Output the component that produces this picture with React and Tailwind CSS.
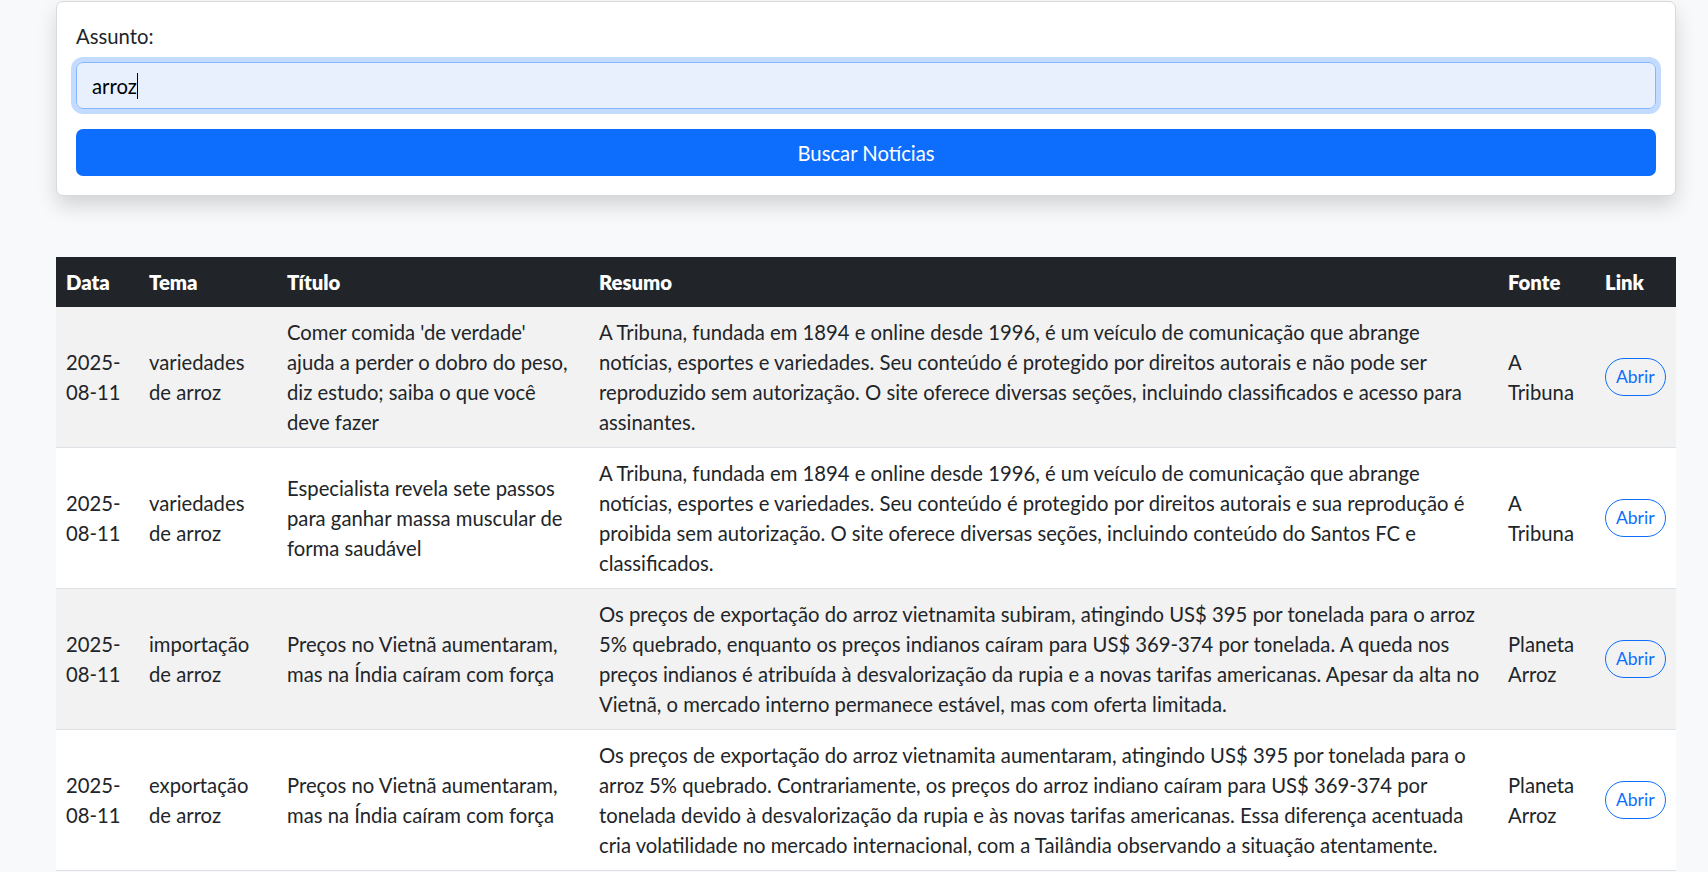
import React from 'react';

const rows = [
  {
    data: ['2025-', '08-11'],
    tema: ['variedades', 'de arroz'],
    titulo: ["Comer comida 'de verdade'", 'ajuda a perder o dobro do peso,', 'diz estudo; saiba o que você', 'deve fazer'],
    resumo: [
      'A Tribuna, fundada em 1894 e online desde 1996, é um veículo de comunicação que abrange',
      'notícias, esportes e variedades. Seu conteúdo é protegido por direitos autorais e não pode ser',
      'reproduzido sem autorização. O site oferece diversas seções, incluindo classificados e acesso para',
      'assinantes.',
    ],
    fonte: ['A', 'Tribuna'],
  },
  {
    data: ['2025-', '08-11'],
    tema: ['variedades', 'de arroz'],
    titulo: ['Especialista revela sete passos', 'para ganhar massa muscular de', 'forma saudável'],
    resumo: [
      'A Tribuna, fundada em 1894 e online desde 1996, é um veículo de comunicação que abrange',
      'notícias, esportes e variedades. Seu conteúdo é protegido por direitos autorais e sua reprodução é',
      'proibida sem autorização. O site oferece diversas seções, incluindo conteúdo do Santos FC e',
      'classificados.',
    ],
    fonte: ['A', 'Tribuna'],
  },
  {
    data: ['2025-', '08-11'],
    tema: ['importação', 'de arroz'],
    titulo: ['Preços no Vietnã aumentaram,', 'mas na Índia caíram com força'],
    resumo: [
      'Os preços de exportação do arroz vietnamita subiram, atingindo US$ 395 por tonelada para o arroz',
      '5% quebrado, enquanto os preços indianos caíram para US$ 369-374 por tonelada. A queda nos',
      'preços indianos é atribuída à desvalorização da rupia e a novas tarifas americanas. Apesar da alta no',
      'Vietnã, o mercado interno permanece estável, mas com oferta limitada.',
    ],
    fonte: ['Planeta', 'Arroz'],
  },
  {
    data: ['2025-', '08-11'],
    tema: ['exportação', 'de arroz'],
    titulo: ['Preços no Vietnã aumentaram,', 'mas na Índia caíram com força'],
    resumo: [
      'Os preços de exportação do arroz vietnamita aumentaram, atingindo US$ 395 por tonelada para o',
      'arroz 5% quebrado. Contrariamente, os preços do arroz indiano caíram para US$ 369-374 por',
      'tonelada devido à desvalorização da rupia e às novas tarifas americanas. Essa diferença acentuada',
      'cria volatilidade no mercado internacional, com a Tailândia observando a situação atentamente.',
    ],
    fonte: ['Planeta', 'Arroz'],
  },
];

const Lines = ({ lines }) => (
  <>
    {lines.map((l, i) => (
      <div key={i} className="whitespace-nowrap">{l}</div>
    ))}
  </>
);

const App = () => {
  return (
    <div className="min-h-screen bg-[#f8f9fa] font-[Lato,sans-serif] text-[20.25px] leading-[30px] text-[#212529]">
      <div className="ml-[56px] w-[1620px] pt-px">
        <div className="bg-white border border-[#d9d9d9] rounded-[7px] shadow-[0_10px_20px_rgba(0,0,0,0.15)] px-[19px] pt-[19px] pb-[19px] mb-[61px]">
          <label className="block mb-[11px]">Assunto:</label>
          <div className="rounded-[7px] shadow-[0_0_0_5px_rgba(13,110,253,0.25)] mb-[20px]">
            <div className="flex items-center w-full h-[47px] px-[15px] bg-[#e8f0fe] border border-[#86b7fe] rounded-[7px] text-black">
              <span>arroz</span>
              <span className="inline-block w-px h-[26px] bg-black" />
            </div>
          </div>
          <button className="block w-full h-[47px] bg-[#0d6efd] text-white rounded-[7px]">
            Buscar Notícias
          </button>
        </div>

        <table className="w-full table-fixed border-collapse">
          <colgroup>
            <col className="w-[83px]" />
            <col className="w-[138px]" />
            <col className="w-[312px]" />
            <col className="w-[909px]" />
            <col className="w-[97px]" />
            <col className="w-[81px]" />
          </colgroup>
          <thead>
            <tr className="bg-[#212529] text-white text-left">
              <th className="p-[10px] font-extrabold">Data</th>
              <th className="p-[10px] font-extrabold">Tema</th>
              <th className="p-[10px] font-extrabold">Título</th>
              <th className="p-[10px] font-extrabold">Resumo</th>
              <th className="p-[10px] font-extrabold">Fonte</th>
              <th className="p-[10px] font-extrabold">Link</th>
            </tr>
          </thead>
          <tbody>
            {rows.map((r, i) => (
              <tr key={i} className={`border-b border-[#dee2e6] ${i % 2 === 0 ? 'bg-[#f2f2f2]' : 'bg-white'}`}>
                <td className="p-[10px] align-middle"><Lines lines={r.data} /></td>
                <td className="p-[10px] align-middle"><Lines lines={r.tema} /></td>
                <td className="p-[10px] align-middle"><Lines lines={r.titulo} /></td>
                <td className="p-[10px] align-middle"><Lines lines={r.resumo} /></td>
                <td className="p-[10px] align-middle"><Lines lines={r.fonte} /></td>
                <td className="p-[10px] align-middle">
                  <a
                    href="#"
                    className="inline-block border border-[#0d6efd] text-[#0d6efd] rounded-full px-[10px] py-[5px] text-[17.5px] leading-[26px]"
                  >
                    Abrir
                  </a>
                </td>
              </tr>
            ))}
          </tbody>
        </table>
      </div>
    </div>
  );
};

export default App;
